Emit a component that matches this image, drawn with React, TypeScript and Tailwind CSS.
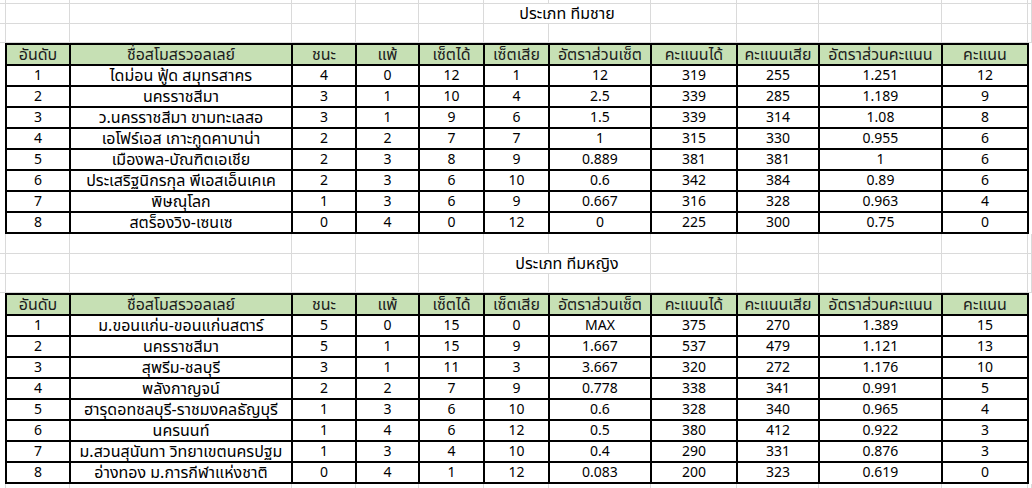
import React from "react";

type Row = [string, string, string, string, string, string, string, string, string, string, string];

const headers = [
  "อันดับ",
  "ชื่อสโมสรวอลเลย์",
  "ชนะ",
  "แพ้",
  "เซ็ตได้",
  "เซ็ตเสีย",
  "อัตราส่วนเซ็ต",
  "คะแนนได้",
  "คะแนนเสีย",
  "อัตราส่วนคะแนน",
  "คะแนน",
];

const menRows: Row[] = [
  ["1", "ไดม่อน ฟู้ด สมุทรสาคร", "4", "0", "12", "1", "12", "319", "255", "1.251", "12"],
  ["2", "นครราชสีมา", "3", "1", "10", "4", "2.5", "339", "285", "1.189", "9"],
  ["3", "ว.นครราชสีมา ขามทะเลสอ", "3", "1", "9", "6", "1.5", "339", "314", "1.08", "8"],
  ["4", "เอโฟร์เอส เกาะกูดคาบาน่า", "2", "2", "7", "7", "1", "315", "330", "0.955", "6"],
  ["5", "เมืองพล-บัณฑิตเอเชีย", "2", "3", "8", "9", "0.889", "381", "381", "1", "6"],
  ["6", "ประเสริฐนิกรกุล พีเอสเอ็นเคเค", "2", "3", "6", "10", "0.6", "342", "384", "0.89", "6"],
  ["7", "พิษณุโลก", "1", "3", "6", "9", "0.667", "316", "328", "0.963", "4"],
  ["8", "สตร็องวิง-เซนเซ", "0", "4", "0", "12", "0", "225", "300", "0.75", "0"],
];

const womenRows: Row[] = [
  ["1", "ม.ขอนแก่น-ขอนแก่นสตาร์", "5", "0", "15", "0", "MAX", "375", "270", "1.389", "15"],
  ["2", "นครราชสีมา", "5", "1", "15", "9", "1.667", "537", "479", "1.121", "13"],
  ["3", "สุพรีม-ชลบุรี", "3", "1", "11", "3", "3.667", "320", "272", "1.176", "10"],
  ["4", "พลังกาญจน์", "2", "2", "7", "9", "0.778", "338", "341", "0.991", "5"],
  ["5", "ฮารุดอทชลบุรี-ราชมงคลธัญบุรี", "1", "3", "6", "10", "0.6", "328", "340", "0.965", "4"],
  ["6", "นครนนท์", "1", "4", "6", "12", "0.5", "380", "412", "0.922", "3"],
  ["7", "ม.สวนสุนันทา วิทยาเขตนครปฐม", "1", "3", "4", "10", "0.4", "290", "331", "0.876", "3"],
  ["8", "อ่างทอง ม.การกีฬาแห่งชาติ", "0", "4", "1", "12", "0.083", "200", "323", "0.619", "0"],
];

// sheet column widths (px), matches the excel grid behind the tables
const sheetCols = "grid-cols-[6px_64px_222px_64px_63px_65px_65px_102px_86px_82px_123px_86px_4px]";

const GridRow = ({ h, title }: { h: string; title?: string }) => (
  <div className={`grid shrink-0 ${sheetCols} ${h}`}>
    {Array.from({ length: 13 }).map((_, i) => {
      if (title && i === 6) {
        return (
          <div
            key={i}
            className="col-span-2 flex items-center justify-center border-r border-b border-[#dadada] text-[16px] leading-none text-black"
          >
            {title}
          </div>
        );
      }
      if (title && i === 7) return null;
      return <div key={i} className="border-r border-b border-[#dadada]" />;
    })}
  </div>
);

const StandingsTable = ({ rows }: { rows: Row[] }) => (
  <div className="flex shrink-0">
    <div className="w-[5px] shrink-0" />
    <div className="grid w-[1024px] grid-cols-[62px_220px_62px_61px_63px_63px_100px_84px_80px_121px_84px] gap-[2px] bg-black p-[2px] leading-none">
      {headers.map((h) => (
        <div key={h} className="flex h-[19px] items-center justify-center bg-[#c6e0b4] text-[16px] text-[#1c1c1c]">
          {h}
        </div>
      ))}
      {rows.map((r) =>
        r.map((c, i) => (
          <div
            key={`${r[0]}-${i}`}
            className={`flex h-[19px] items-center justify-center bg-white text-black ${
              i === 1 ? "text-[16px]" : "text-[14px]"
            }`}
          >
            {c}
          </div>
        ))
      )}
    </div>
    <div className="w-[3px] shrink-0" />
  </div>
);

export default function App() {
  return (
    <div
      className="flex h-[488px] w-[1032px] flex-col overflow-hidden bg-white"
      style={{ fontFamily: "Tahoma, 'Noto Sans Thai', 'Leelawadee UI', 'Noto Sans', 'DejaVu Sans', sans-serif" }}
    >
      <GridRow h="h-[4px]" />
      <GridRow h="h-[20px]" title="ประเภท ทีมชาย" />
      <GridRow h="h-[19px]" />
      <StandingsTable rows={menRows} />
      <GridRow h="h-[20px]" />
      <GridRow h="h-[20px]" title="ประเภท ทีมหญิง" />
      <GridRow h="h-[19px]" />
      <StandingsTable rows={womenRows} />
      <GridRow h="h-[20px]" />
    </div>
  );
}
